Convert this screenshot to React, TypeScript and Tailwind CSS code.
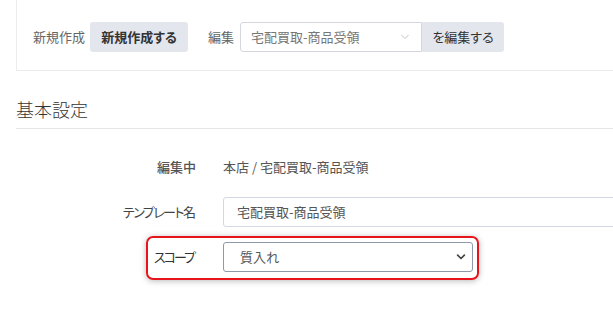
import React from 'react';

const FONT = "font-['Noto_Sans_CJK_JP','Noto_Sans',sans-serif] [font-feature-settings:'palt']";

function Chevron({ className }: { className?: string }) {
  return (
    <svg className={className} viewBox="0 0 12 8" fill="none" stroke="currentColor" strokeLinecap="round" strokeLinejoin="round">
      <polyline points="1.5,1.5 6,6 10.5,1.5" />
    </svg>
  );
}

export default function App() {
  return (
    <div className={`w-[613px] h-[310px] overflow-hidden bg-white text-[13px] text-[#444] ${FONT}`}>
      <div className="pl-4">
        {/* Top toolbar card */}
        <div className="w-[640px] border-l border-b border-[#ececef] pl-4 pt-[22px] pb-[18px] flex items-center">
          <span className="text-[#666] mr-[5px]">新規作成</span>
          <button className="w-[98px] h-[30px] rounded-[3px] bg-[#e3e6ed] font-bold text-[#333] flex items-center justify-center">
            新規作成する
          </button>
          <span className="text-[#666] ml-5 mr-[6px]">編集</span>
          <div className="w-[182px] h-[30px] border border-[#d4d7dc] rounded-l-[3px] flex items-center pl-[10px] pr-[11px] text-[#777]">
            <span className="flex-1">宅配買取-商品受領</span>
            <Chevron className="w-[10px] h-[6px] text-[#bbb] [stroke-width:1.2]" />
          </div>
          <button className="w-[82px] h-[30px] rounded-r-[3px] bg-[#e3e6ed] text-[#333] flex items-center justify-center">
            を編集する
          </button>
        </div>

        {/* Section heading */}
        <h2 className="mt-[25px] w-[640px] text-[18px] font-light leading-[27px] text-[#333] pb-[5px] border-b border-[#e6e6e6]">基本設定</h2>

        {/* Form rows */}
        <div className="mt-[23px] flex flex-col gap-[15px]">
          <div className="flex items-center h-[30px]">
            <span className="w-[180px] shrink-0 text-right font-medium text-[#555]">編集中</span>
            <span className="ml-[27px] text-[#555]">本店 / 宅配買取-商品受領</span>
          </div>
          <div className="flex items-center h-[30px]">
            <span className="w-[180px] shrink-0 text-right text-[#444] tracking-[-1.5px] pr-[1.5px]">テンプレート名</span>
            <div className="ml-[27px] w-[420px] h-[30px] border border-[#d3d9e2] rounded-[3px] flex items-center pl-[13px] text-[#555] shrink-0">
              宅配買取-商品受領
            </div>
          </div>
          <div className="relative flex items-center h-[30px]">
            <span className="w-[180px] shrink-0 text-right text-[#333] tracking-[-2px] pr-[2px]">スコープ</span>
            <div className="ml-[27px] w-[250px] h-[30px] border border-[#8e9aab] rounded-[3px] flex items-center pl-4 pr-[6px] text-[#555]">
              <span className="flex-1">質入れ</span>
              <Chevron className="w-[10px] h-[6px] text-[#444] [stroke-width:2.2]" />
            </div>
            {/* annotation highlight */}
            <div className="absolute left-[130px] top-[-6px] w-[333px] h-[44px] border-2 border-[#e8141c] rounded-[7px] shadow-[0_1px_6px_rgba(0,0,0,0.28)] pointer-events-none" />
          </div>
        </div>
      </div>
    </div>
  );
}
